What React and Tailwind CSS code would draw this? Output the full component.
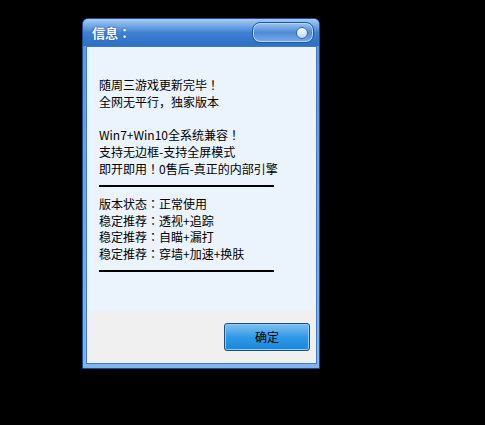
import React from "react";

const font = { fontFamily: '"Noto Sans CJK JP", "Noto Sans CJK SC", "Noto Sans", sans-serif' };

function Rule() {
  return <div className="h-[2px] w-[175px] bg-black" />;
}

export default function App() {
  return (
    <div className="w-[485px] h-[425px] bg-black pt-[18px] pl-[82px]" style={font}>
      <div className="w-[238px] h-[351px] flex flex-col border border-[#1a4c8c] rounded-t-[6px] bg-gradient-to-b from-[#5c97e0] to-[#7fb4ee] overflow-hidden">
        {/* title bar */}
        <div className="h-[27px] flex items-center pl-[9px] pr-[5px] bg-gradient-to-b from-[#a9cdf4] via-[#3f82d4] to-[#2d6fc4]">
          <div className="flex-1 text-[13px] font-bold text-white leading-none [text-shadow:0_0_2px_#1d4f96]">信息：</div>
          <div className="w-[62px] h-[21px] rounded-[8px] border border-[#1f5aa8] bg-gradient-to-b from-[#9dc3ee] via-[#4f8bd6] to-[#78acea] shadow-[inset_0_0_0_1px_#b9d5f4] flex items-center justify-end pr-[5px]">
            <div className="w-[12px] h-[12px] rounded-full border border-[#2f69b6] bg-gradient-to-b from-[#ffffff] to-[#b9d6f5]" />
          </div>
        </div>
        {/* body */}
        <div className="flex-1 flex flex-col pl-[3px] pr-[2px] pb-[4px]">
          <div className="flex-1 flex flex-col border border-[#3d7bcb]">
            <div className="h-[264px] bg-[#ebf3fc] pl-[12px] pt-[30px] text-[12px] leading-[16.8px] text-black">
              <div>随周三游戏更新完毕！</div>
              <div>全网无平行，独家版本</div>
              <div>&nbsp;</div>
              <div>Win7+Win10全系统兼容！</div>
              <div>支持无边框-支持全屏模式</div>
              <div>即开即用！0售后-真正的内部引擎</div>
              <div className="mt-[7px] mb-[9px]"><Rule /></div>
              <div>版本状态：正常使用</div>
              <div>稳定推荐：透视+追踪</div>
              <div>稳定推荐：自瞄+漏打</div>
              <div>稳定推荐：穿墙+加速+换肤</div>
              <div className="mt-[7px]"><Rule /></div>
            </div>
            <div className="flex-1 bg-[#f0f0f0] flex justify-end items-start pt-[12px] pr-[6px]">
              <button className="w-[86px] h-[28px] rounded-[3px] border border-[#1e4d80] bg-gradient-to-b from-[#7cc1f1] via-[#2f99e6] to-[#1787dc] shadow-[inset_0_0_0_1px_#8fcaf3] text-[12px] text-black">
                确定
              </button>
            </div>
          </div>
        </div>
      </div>
    </div>
  );
}
